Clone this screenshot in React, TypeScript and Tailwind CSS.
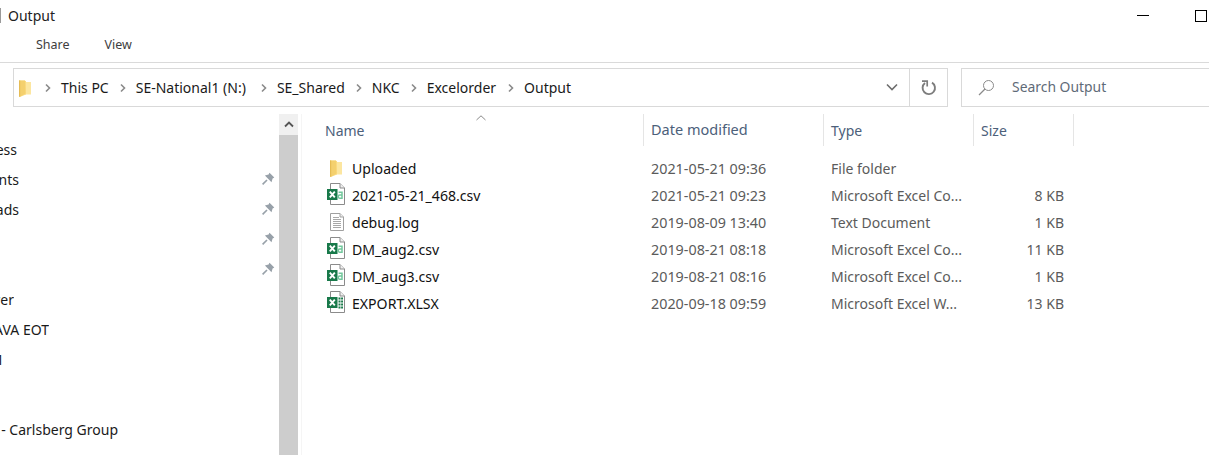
const font = { fontFamily: '"Noto Sans", sans-serif' };

function Chevron() {
  return (
    <svg width="8" height="10" viewBox="0 0 8 10" className="shrink-0">
      <path d="M2 1.5 L5.5 5 L2 8.5" fill="none" stroke="#8a8a8a" strokeWidth="1.6" />
    </svg>
  );
}

function Folder({ className = "" }: { className?: string }) {
  return (
    <svg width="12" height="17" viewBox="0 0 12 17" className={`shrink-0 ${className}`}>
      <path d="M0 0.5 H6 L7 2 H12 V14.5 H0 Z" fill="#fce6a0" />
      <path d="M6 1 H7 V14.5 L2 16.5 H0.5 V14 Z" fill="#fbdc85" />
      <path d="M0 0.5 L6 0.5 L6.5 13.5 L1 16.8 L0 16.5 Z" fill="#f4d06e" />
      <path d="M0 0.5 H1.2 V16.8 H0 Z" fill="#e6bc55" />
    </svg>
  );
}

function ExcelIcon({ kind }: { kind: "csv" | "xlsx" }) {
  return (
    <svg width="18" height="22" viewBox="0 0 18 22" className="shrink-0 ml-[9px] mb-[3px]">
      <path d="M3.5 0.5 H13 L17.5 5 V21.5 H3.5 Z" fill="#fff" stroke="#8b8b8b" />
      <path d="M13 0.5 V5 H17.5" fill="#f0f0f0" stroke="#8b8b8b" />
      <rect x="0" y="6" width="10.5" height="11" fill="#18794a" />
      <path d="M2.8 8.6 L7.8 14.4 M7.8 8.6 L2.8 14.4" stroke="#fff" strokeWidth="1.9" />
      {kind === "csv" ? (
        <path d="M11.6 9.2 H15 V15.2 H12.8 A1.5 1.5 0 0 1 12.8 12 H15" fill="none" stroke="#72c79c" strokeWidth="1.5" />
      ) : (
        <path d="M11.5 7.5 H16 M11.5 10.5 H16 M11.5 13.5 H16 M11.5 16.5 H16" stroke="#1b7a4b" strokeWidth="1.8" strokeDasharray="2 0.6" />
      )}
    </svg>
  );
}

function TextIcon() {
  return (
    <svg width="14" height="18" viewBox="0 0 14 18" className="shrink-0 ml-[12px]">
      <path d="M0.5 0.5 H10 L13.5 4 V17.5 H0.5 Z" fill="#fff" stroke="#a0a0a0" />
      <path d="M10 0.5 V4 H13.5" fill="#eee" stroke="#a0a0a0" />
      <path d="M3 4.5 H9 M3 6.5 H11 M3 8.5 H11 M3 10.5 H11 M3 12.5 H11 M3 14.5 H11" stroke="#a8a8a8" />
    </svg>
  );
}

function Pin() {
  return (
    <svg width="13" height="13" viewBox="0 0 13 13">
      <path d="M7.5 0.8 L12.3 5.6 L10.6 6.4 L9.5 10.2 L2.9 3.6 L6.6 2.5 Z" fill="#98a1a9" />
      <path d="M5 8 L0.6 12.4" stroke="#98a1a9" strokeWidth="1.6" />
    </svg>
  );
}

const navRows: { text: string; w: number; pin?: boolean; h?: string }[] = [
  { text: "Quick access", w: 17 },
  { text: "Documents", w: 19, pin: true },
  { text: "Downloads", w: 19, pin: true },
  { text: "", w: 0, pin: true },
  { text: "", w: 0, pin: true },
  { text: "Power", w: 14 },
  { text: "JAVA EOT", w: 49 },
  { text: "1", w: 4 },
  { text: "", w: 0, h: "h-[40px]" },
  { text: "OneDrive - Carlsberg Group", w: 118 },
];

const files: { name: string; date: string; type: string; size: string; icon: "folder" | "csv" | "xlsx" | "text" }[] = [
  { name: "Uploaded", date: "2021-05-21 09:36", type: "File folder", size: "", icon: "folder" },
  { name: "2021-05-21_468.csv", date: "2021-05-21 09:23", type: "Microsoft Excel Co...", size: "8 KB", icon: "csv" },
  { name: "debug.log", date: "2019-08-09 13:40", type: "Text Document", size: "1 KB", icon: "text" },
  { name: "DM_aug2.csv", date: "2019-08-21 08:18", type: "Microsoft Excel Co...", size: "11 KB", icon: "csv" },
  { name: "DM_aug3.csv", date: "2019-08-21 08:16", type: "Microsoft Excel Co...", size: "1 KB", icon: "csv" },
  { name: "EXPORT.XLSX", date: "2020-09-18 09:59", type: "Microsoft Excel W...", size: "13 KB", icon: "xlsx" },
];

const crumbs: { t: string; pr: string }[] = [
  { t: "This PC", pr: "pr-[10px]" },
  { t: "SE-National1 (N:)", pr: "pr-[14px]" },
  { t: "SE_Shared", pr: "pr-[10px]" },
  { t: "NKC", pr: "pr-[10px]" },
  { t: "Excelorder", pr: "pr-[11px]" },
  { t: "Output", pr: "pr-[10px]" },
];

function Header({ label, w, size = "" }: { label: string; w: string; size?: string }) {
  return (
    <div className={`${w} ${size} h-[32px] border-r border-[#e5e5e5] flex items-center pl-[7px] text-[#4c607a]`}>{label}</div>
  );
}

export default function App() {
  return (
    <div style={font} className="w-[1209px] h-[455px] overflow-hidden bg-white text-[14px] text-[#1a1a1a] flex flex-col">
      <div className="h-[31px] flex items-center shrink-0">
        <div className="w-px h-[15px] bg-[#9a9a9a]" />
        <span className="ml-[7px] text-[#222]">Output</span>
        <div className="ml-auto flex items-center">
          <div className="w-3 h-px bg-black mr-[46px]" />
          <div className="w-3 h-3 border border-black mr-[2px]" />
        </div>
      </div>

      <div className="h-[32px] border-b border-[#dadada] flex items-center text-[12.5px] text-[#3e3e3e] shrink-0 pb-[3px] pl-[36px] gap-[35px]">
        <span>Share</span>
        <span>View</span>
      </div>

      <div className="h-[44px] flex shrink-0 pl-[13px] pt-[5px]">
        <div className="w-[935px] h-[39px] border border-[#d9d9d9] flex items-center">
          <div className="pl-[5px] w-[30px] shrink-0">
            <Folder className="mt-[1px]" />
          </div>
          <div className="flex items-center">
            {crumbs.map((c) => (
              <div key={c.t} className="flex items-center">
                <Chevron />
                <span className={`pl-[9px] ${c.pr}`}>{c.t}</span>
              </div>
            ))}
          </div>
          <div className="ml-auto flex items-center h-full">
            <svg width="14" height="9" viewBox="0 0 14 9" className="mr-[10px]">
              <path d="M2 1.5 L7 6.5 L12 1.5" fill="none" stroke="#6e6e6e" strokeWidth="1.6" />
            </svg>
            <div className="w-[38px] h-full border-l border-[#d9d9d9] flex items-center justify-center">
              <svg width="16" height="16" viewBox="0 0 16 16">
                <path d="M4 3 A6.2 6.2 0 1 0 11 2.6" fill="none" stroke="#7d7d7d" strokeWidth="1.9" />
                <path d="M1 1.2 H6.2 V6.5" fill="none" stroke="#7d7d7d" strokeWidth="1.7" />
              </svg>
            </div>
          </div>
        </div>
        <div className="ml-[13px] flex-1 h-[39px] border border-r-0 border-[#d9d9d9] flex items-center pl-[16px] text-[#5f6b78]">
          <svg width="17" height="17" viewBox="0 0 17 17" className="shrink-0">
            <circle cx="10.5" cy="6.5" r="5" fill="none" stroke="#8a8a8a" />
            <path d="M7 10 L1 16" stroke="#8a8a8a" strokeWidth="1.2" />
          </svg>
          <span className="ml-[17px] text-[13.9px]">Search Output</span>
        </div>
      </div>

      <div className="flex flex-1 min-h-0 pt-[7px]">
        <div className="w-[279px] shrink-0 pt-[20px] overflow-hidden">
          {navRows.map((r, i) => (
            <div key={i} className={`${r.h ?? "h-[30px]"} relative flex items-center`}>
              {r.text && (
                <div className="overflow-hidden flex justify-end" style={{ width: r.w }}>
                  <span className="whitespace-nowrap shrink-0">{r.text}</span>
                </div>
              )}
              {r.pin && (
                <div className="absolute left-[262px] top-[8px]">
                  <Pin />
                </div>
              )}
            </div>
          ))}
        </div>

        <div className="w-[19px] shrink-0 flex flex-col bg-[#cdcdcd]">
          <div className="h-[21px] bg-[#f0f0f0] flex items-center justify-center">
            <svg width="10" height="7" viewBox="0 0 10 7">
              <path d="M1 5.5 L5 1.5 L9 5.5" fill="none" stroke="#555" strokeWidth="1.8" />
            </svg>
          </div>
        </div>
        <div className="w-px shrink-0 ml-[3px] bg-[#f5f5f5]" />

        <div className="flex-1 relative pl-[16px]">
          <svg width="10" height="6" viewBox="0 0 10 6" className="absolute left-[174px] top-[1px]">
            <path d="M0.5 5 L5 0.8 L9.5 5" fill="none" stroke="#8a8a8a" />
          </svg>
          <div className="flex">
            <Header label="Name" w="w-[326px]" />
            <Header label="Date modified" w="w-[180px]" size="text-[14.5px]" />
            <Header label="Type" w="w-[150px]" />
            <Header label="Size" w="w-[100px]" />
          </div>
          <div className="pt-[9px] flex flex-col">
            {files.map((f) => (
              <div key={f.name} className="h-[27px] flex items-center">
                <div className="w-[326px] flex items-center">
                  <div className="w-[27px] flex items-center shrink-0">
                    {f.icon === "folder" ? <Folder className="ml-[12px]" /> : f.icon === "text" ? <TextIcon /> : <ExcelIcon kind={f.icon} />}
                  </div>
                  <span className="pl-[7px] text-[#111] text-[14.1px]">{f.name}</span>
                </div>
                <div className="w-[180px] pl-[7px] text-[#5b5b5b] text-[14.35px]">{f.date}</div>
                <div className="w-[150px] pl-[7px] text-[#5b5b5b]">{f.type}</div>
                <div className="w-[90px] text-right text-[#5b5b5b]">{f.size}</div>
              </div>
            ))}
          </div>
        </div>
      </div>
    </div>
  );
}
